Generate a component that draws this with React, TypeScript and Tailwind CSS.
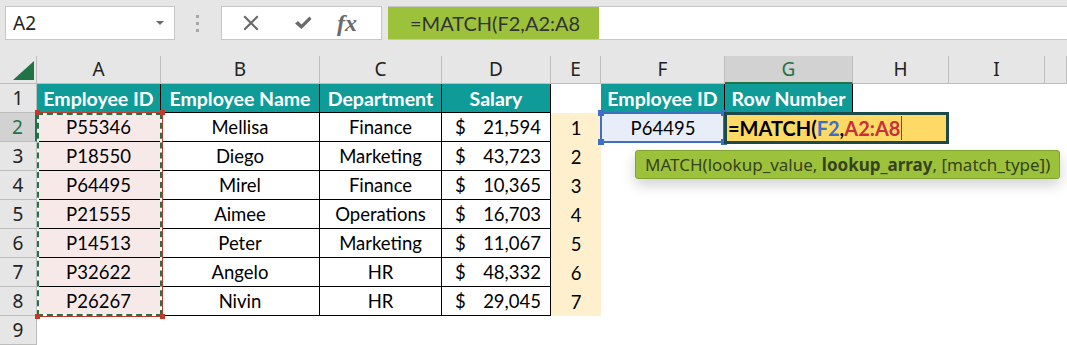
import React from "react";

const CAL = { fontFamily: "Lato, 'Liberation Sans', sans-serif" };
const SEG = { fontFamily: "'Noto Sans', 'Open Sans', sans-serif" };

const data = [
  ["P55346", "Mellisa", "Finance", "21,594"],
  ["P18550", "Diego", "Marketing", "43,723"],
  ["P64495", "Mirel", "Finance", "10,365"],
  ["P21555", "Aimee", "Operations", "16,703"],
  ["P14513", "Peter", "Marketing", "11,067"],
  ["P32622", "Angelo", "HR", "48,332"],
  ["P26267", "Nivin", "HR", "29,045"],
];

const cols = ["A", "B", "C", "D", "E", "F", "G", "H", "I", ""];

function TopBar() {
  return (
    <div className="h-[56px] bg-[#e6e6e6] flex items-start pt-[6px] border-b border-[#e6e6e6]">
      <div className="ml-[5px] w-[170px] h-[34px] bg-white border border-[#c6c6c6] flex items-center justify-between pl-[7px] pr-[10px]">
        <span className="text-[19px] text-[#222] leading-none" style={SEG}>A2</span>
        <span className="w-0 h-0 border-l-[4px] border-r-[4px] border-t-[4px] border-l-transparent border-r-transparent border-t-[#6b6b6b]" />
      </div>
      <div className="ml-[21px] mt-[9px] flex flex-col gap-[4px]">
        <span className="w-[3px] h-[3px] bg-[#a8a8a8]" />
        <span className="w-[3px] h-[3px] bg-[#a8a8a8]" />
        <span className="w-[3px] h-[3px] bg-[#a8a8a8]" />
      </div>
      <div className="ml-[22px] w-[161px] h-[34px] bg-white border border-[#c6c6c6] flex items-center">
        <svg width="16" height="16" viewBox="0 0 16 16" className="ml-[21px]">
          <path d="M2 2 L14 14 M14 2 L2 14" stroke="#6a6a6a" strokeWidth="2.2" strokeLinecap="square" />
        </svg>
        <svg width="18" height="16" viewBox="0 0 18 16" className="ml-[35px]">
          <path d="M1 8.5 L4 6 L7.5 9.5 L15.5 1.5 L17.5 4 L7.5 14 Z" fill="#6a6a6a" />
        </svg>
        <span className="ml-[25px] text-[24px] italic font-bold text-[#6a6a6a] leading-none" style={{ fontFamily: "'Liberation Serif', serif" }}>fx</span>
      </div>
      <div className="ml-[6px] flex-1 h-[34px] bg-white border-t border-b border-[#c6c6c6] flex items-stretch">
        <div className="w-[211px] bg-[#9cc23c] flex items-center pl-[22px] text-[20px] text-[#333] leading-none" style={CAL}>
          =MATCH(F2,A2:A8
        </div>
      </div>
    </div>
  );
}

export default function App() {
  const hdrCell = "bg-[#e6e6e6] border-r border-b border-[#bdbdbd] flex items-center justify-center text-[19px] text-[#222] leading-none";
  const rowHdr = "bg-[#e6e6e6] border-r border-b border-[#bdbdbd] flex items-center justify-center text-[19px] text-[#222] leading-none";
  const teal = "bg-[#0f9b97] text-white font-bold border-r border-b border-black flex items-center justify-center text-[19.5px] leading-none pt-[1px]";
  const cell = "border-r border-b border-black flex items-center justify-center text-[18.5px] text-black leading-none pt-[1px]";

  return (
    <div className="w-[1067px] h-[345px] overflow-hidden bg-white">
      <TopBar />
      <div className="relative">
        <div className="grid grid-cols-[37px_124px_159px_122px_109px_50px_124px_128px_96px_96px_22px] grid-rows-[28px_repeat(9,29px)]">
          {/* column headers */}
          <div className={"bg-[#e6e6e6] border-r border-b border-[#bdbdbd] relative"}>
            <svg width="22" height="20" viewBox="0 0 22 20" className="absolute left-[13px] top-[5px]">
              <path d="M21 0 L21 19 L0 19 Z" fill="#217346" />
            </svg>
          </div>
          {cols.map((c, i) =>
            c === "G" ? (
              <div key={i} className="bg-[#d2d2d2] border-r border-[#bdbdbd] border-b-2 border-b-[#217346] flex items-center justify-center text-[19px] text-[#217346] leading-none" style={SEG}>
                {c}
              </div>
            ) : (
              <div key={i} className={hdrCell} style={SEG}>
                {c}
              </div>
            )
          )}

          {/* row 1 */}
          <div className={rowHdr} style={SEG}>1</div>
          <div className={teal} style={CAL}>Employee ID</div>
          <div className={teal} style={CAL}>Employee Name</div>
          <div className={teal} style={CAL}>Department</div>
          <div className={teal} style={CAL}>Salary</div>
          <div />
          <div className={teal} style={CAL}>Employee ID</div>
          <div className={teal} style={CAL}>Row Number</div>
          <div />
          <div />
          <div />

          {/* rows 2-8 */}
          {data.map((r, i) => (
            <React.Fragment key={i}>
              {i === 0 ? (
                <div className="bg-[#d2d2d2] border-b border-[#bdbdbd] border-r-2 border-r-[#217346] flex items-center justify-center text-[19px] text-[#217346] leading-none" style={SEG}>
                  2
                </div>
              ) : (
                <div className={rowHdr} style={SEG}>{i + 2}</div>
              )}
              <div className={cell + " bg-[#f8e9e9]"} style={CAL}>{r[0]}</div>
              <div className={cell} style={CAL}>{r[1]}</div>
              <div className={cell} style={CAL}>{r[2]}</div>
              <div className={"border-r border-b border-black flex items-center justify-between pl-[13px] pr-[9px] pt-[1px] text-[18.5px] text-black leading-none"} style={CAL}>
                <span>$</span>
                <span>{r[3]}</span>
              </div>
              <div className="bg-[#fef0cd] flex items-center justify-center text-[18.5px] text-black leading-none pt-[1px]" style={CAL}>{i + 1}</div>
              {i === 0 ? (
                <div className="bg-[#e8eef9] flex items-center justify-center text-[18.5px] text-black leading-none pt-[1px]" style={CAL}>P64495</div>
              ) : (
                <div />
              )}
              <div />
              <div />
              <div />
              <div />
            </React.Fragment>
          ))}

          {/* row 9 */}
          <div className={rowHdr} style={SEG}>9</div>
        </div>

        {/* A2:A8 copy marquee */}
        <div className="absolute left-[37px] top-[56px] w-[126px] h-[205px] border-t border-r border-b border-[#c0392b]">
          <div className="absolute inset-0 border-2 border-white" />
          <div className="absolute inset-0 border-2 border-dashed border-[#217346]" />
          <span className="absolute -left-[2px] -top-[3px] w-[5px] h-[5px] bg-[#c0392b]" />
          <span className="absolute -right-[3px] -top-[3px] w-[5px] h-[5px] bg-[#c0392b]" />
          <span className="absolute -left-[2px] -bottom-[3px] w-[5px] h-[5px] bg-[#c0392b]" />
          <span className="absolute -right-[3px] -bottom-[3px] w-[5px] h-[5px] bg-[#c0392b]" />
        </div>

        {/* F2 reference highlight */}
        <div className="absolute left-[600px] top-[56px] w-[125px] h-[31px] border-2 border-[#3d6fc4]">
          <span className="absolute -left-[4px] -top-[4px] w-[6px] h-[6px] bg-[#3d6fc4]" />
          <span className="absolute -right-[4px] -top-[4px] w-[6px] h-[6px] bg-[#3d6fc4]" />
          <span className="absolute -left-[4px] -bottom-[4px] w-[6px] h-[6px] bg-[#3d6fc4]" />
          <span className="absolute -right-[4px] -bottom-[4px] w-[6px] h-[6px] bg-[#3d6fc4]" />
        </div>

        {/* G2 edit cell */}
        <div className="absolute left-[724px] top-[56px] w-[225px] h-[32px] border-[3px] border-[#1c4a4a] bg-[#ffd966] flex items-center pl-[1px] text-[20px] font-bold leading-none" style={CAL}>
          <span className="text-black">=MATCH(</span>
          <span className="text-[#3d6fc4]">F2</span>
          <span className="text-black">,</span>
          <span className="text-[#c8303c]">A2:A8</span>
          <span className="ml-[1px] w-[1px] h-[24px] bg-[#2a4fc4]" />
        </div>

        {/* tooltip */}
        <div className="absolute left-[635px] top-[94px] w-[425px] h-[29px] bg-[#9cc23c] border border-[#82a330] rounded-[3px] shadow-[0_6px_14px_rgba(0,0,0,0.18)] flex items-center pl-[9px] text-[17px] text-[#37431c] leading-none whitespace-nowrap" style={SEG}>
          MATCH(lookup_value,&nbsp;<span className="font-bold">lookup_array</span>, [match_type])
        </div>
      </div>
    </div>
  );
}
